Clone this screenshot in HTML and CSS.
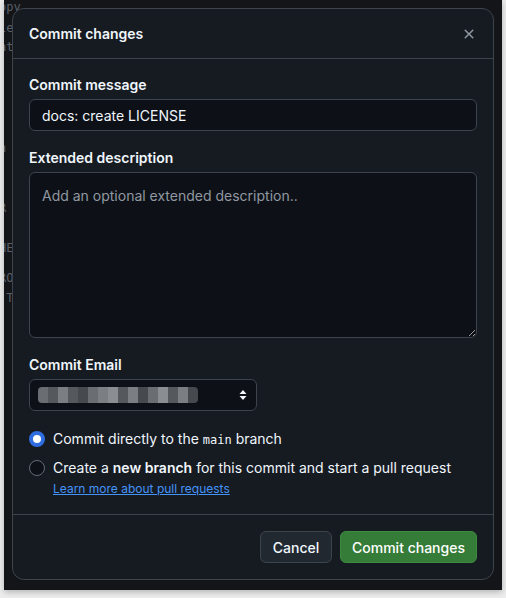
FILE: index.html
```html
<!DOCTYPE html>
<html lang="en">
<head>
<meta charset="utf-8">
<title>Commit changes</title>
<link rel="stylesheet" href="styles.css">
</head>
<body>
<div class="screen">
  <div class="bg-text">
    <div class="bg-line l1">opy</div>
    <div class="bg-line l2">le</div>
    <div class="bg-line l3">at</div>
    <div class="bg-line l4">n</div>
    <div class="bg-line l5">R</div>
    <div class="bg-line l6">HE</div>
    <div class="bg-line l7">RO</div>
    <div class="bg-line l8">&nbsp;T</div>
  </div>

  <div class="dialog">
    <div class="dialog-header">
      <h1 class="dialog-title">Commit changes</h1>
      <button class="close-btn" aria-label="Close">
        <svg width="16" height="16" viewBox="0 0 16 16"><path d="M3.72 3.72a.75.75 0 0 1 1.06 0L8 6.94l3.22-3.220a.749.749 0 0 1 1.275.326.749.749 0 0 1-.215.734L9.06 8l3.22 3.22a.749.749 0 0 1-.326 1.275.749.749 0 0 1-.734-.215L8 9.06l-3.220 3.22a.751.751 0 0 1-1.042-.018.751.751 0 0 1-.018-1.042L6.94 8 3.72 4.78a.75.75 0 0 1 0-1.06Z" fill="currentColor"/></svg>
      </button>
    </div>

    <div class="dialog-body">
      <label class="field-label">Commit message</label>
      <input class="text-input" type="text" value="docs: create LICENSE">

      <label class="field-label">Extended description</label>
      <textarea class="text-area" placeholder="Add an optional extended description.."></textarea>

      <label class="field-label">Commit Email</label>
      <div class="select">
        <div class="blur">
          <span class="px s1"></span><span class="px s2"></span><span class="px s3"></span><span class="px s2"></span><span class="px s4"></span><span class="px s1"></span><span class="px s3"></span><span class="px s5"></span><span class="px s2"></span><span class="px s3"></span><span class="px s4"></span><span class="px s1"></span><span class="px s5"></span><span class="px s2"></span><span class="px s3"></span><span class="px s4"></span>
        </div>
        <svg class="updown" width="8" height="12" viewBox="0 0 8 12"><path d="M4 1 L7.5 5 H0.5 Z M4 11 L0.5 7 H7.5 Z" fill="#f0f6fc"/></svg>
      </div>

      <div class="radios">
        <div class="radio-row">
          <span class="radio checked"></span>
          <span class="radio-text">Commit directly to the <code class="mono">main</code> branch</span>
        </div>
        <div class="radio-row">
          <span class="radio"></span>
          <span class="radio-text">Create a <strong>new branch</strong> for this commit and start a pull request</span>
        </div>
        <a class="learn" href="#">Learn more about pull requests</a>
      </div>
    </div>

    <div class="dialog-footer">
      <button class="btn btn-default">Cancel</button>
      <button class="btn btn-primary">Commit changes</button>
    </div>
  </div>
</div>
</body>
</html>
```

FILE: styles.css
```css
* { box-sizing: border-box; }

html, body {
  margin: 0;
  padding: 0;
}

body {
  background: #ededed;
  font-family: Inter, "Noto Sans", "Liberation Sans", sans-serif;
  color: #f0f6fc;
  width: 506px;
  height: 598px;
  overflow: hidden;
}

.screen {
  position: relative;
  margin-left: 4px;
  width: 498px;
  height: 590px;
  background: #131519;
  box-shadow: 0 2px 6px rgba(0,0,0,0.25);
  overflow: hidden;
}

.bg-text {
  font-family: "DejaVu Sans Mono", "Liberation Mono", monospace;
  font-size: 12px;
  color: #5b6068;
  margin-left: -5px;
  white-space: nowrap;
}

.bg-line { height: 20px; line-height: 20px; }
.l1 { margin-top: -3px; }
.l2 { margin-top: 1px; }
.l3 { margin-top: -1px; }
.l4 { margin-top: 81px; }
.l5 { margin-top: 40px; }
.l6 { margin-top: 20px; }
.l7 { margin-top: 10px; }
.l8 { margin-top: 0; }

.dialog {
  position: absolute;
  left: 8px;
  top: 8px;
  width: 482px;
  height: 572px;
  background: #161b22;
  border: 1px solid #3d444d;
  border-radius: 12px;
  display: flex;
  flex-direction: column;
}

.dialog-header {
  height: 50px;
  display: flex;
  align-items: center;
  justify-content: space-between;
  padding: 0 12px 0 16px;
  border-bottom: 1px solid #3d444d;
}

.dialog-title {
  margin: 0;
  font-size: 14px;
  font-weight: 600;
  line-height: 20px;
  padding-top: 1px;
}

.close-btn {
  background: none;
  border: 0;
  padding: 0;
  width: 24px;
  height: 24px;
  display: flex;
  align-items: center;
  justify-content: center;
  color: #9198a1;
}

.dialog-body {
  flex: 1;
  padding: 16px;
  display: flex;
  flex-direction: column;
}

.field-label {
  display: block;
  font-size: 14px;
  font-weight: 600;
  line-height: 20px;
  margin-bottom: 4px;
}

.text-input {
  width: 100%;
  height: 32px;
  background: #0d1117;
  border: 1px solid #3d444d;
  border-radius: 6px;
  color: #f0f6fc;
  font-family: inherit;
  font-size: 14px;
  padding: 0 12px;
  margin-bottom: 17px;
  outline: none;
}

.text-area {
  width: 100%;
  height: 166px;
  background: #0d1117;
  border: 1px solid #3d444d;
  border-radius: 6px;
  color: #f0f6fc;
  font-family: inherit;
  font-size: 14px;
  line-height: 20px;
  padding: 13px 12px;
  margin: 0 0 17px;
  resize: vertical;
  color-scheme: dark;
  outline: none;
  display: block;
}

.text-area::placeholder { color: #9198a1; }

.select {
  width: 228px;
  height: 32px;
  background: #0d1117;
  border: 1px solid #3d444d;
  border-radius: 6px;
  display: flex;
  align-items: center;
  justify-content: space-between;
  padding: 0 9px 0 8px;
  margin-bottom: 18px;
}

.blur {
  display: flex;
  height: 16px;
  width: 160px;
  border-radius: 4px;
  overflow: hidden;
}

.px { flex: 1; height: 16px; }
.s1 { background: #6a6d72; }
.s2 { background: #55595e; }
.s3 { background: #7b7e83; }
.s4 { background: #46494e; }
.s5 { background: #8a8d91; }

.updown { display: block; }

.radios {
  display: flex;
  flex-direction: column;
}

.radio-row {
  display: flex;
  align-items: center;
  gap: 8px;
  height: 20px;
  margin-bottom: 9px;
  font-size: 14px;
  line-height: 20px;
}

.radio-row + .radio-row { margin-bottom: 2px; }

.radio {
  width: 16px;
  height: 16px;
  border-radius: 50%;
  border: 1px solid #656c76;
  background: #0d1117;
  flex: none;
}

.radio.checked {
  border: 4px solid #2f6de1;
  background: #ffffff;
}

.mono {
  font-family: "DejaVu Sans Mono", "Liberation Mono", monospace;
  font-size: 12px;
}

.radio-text strong { font-weight: 600; }

.learn {
  margin-left: 24px;
  font-size: 12px;
  line-height: 18px;
  color: #4493f8;
  text-decoration: underline;
  align-self: flex-start;
}

.dialog-footer {
  border-top: 1px solid #3d444d;
  padding: 16px;
  display: flex;
  justify-content: flex-end;
  gap: 8px;
}

.btn {
  height: 32px;
  border-radius: 6px;
  font-family: inherit;
  font-size: 14px;
  font-weight: 500;
  padding: 0 8px;
  border: 1px solid #3d444d;
  white-space: nowrap;
}

.btn-default {
  background: #212830;
  color: #f0f6fc;
  width: 72px;
}

.btn-primary {
  background: #367c39;
  border-color: #3f8a41;
  color: #ffffff;
  width: 137px;
}
```
